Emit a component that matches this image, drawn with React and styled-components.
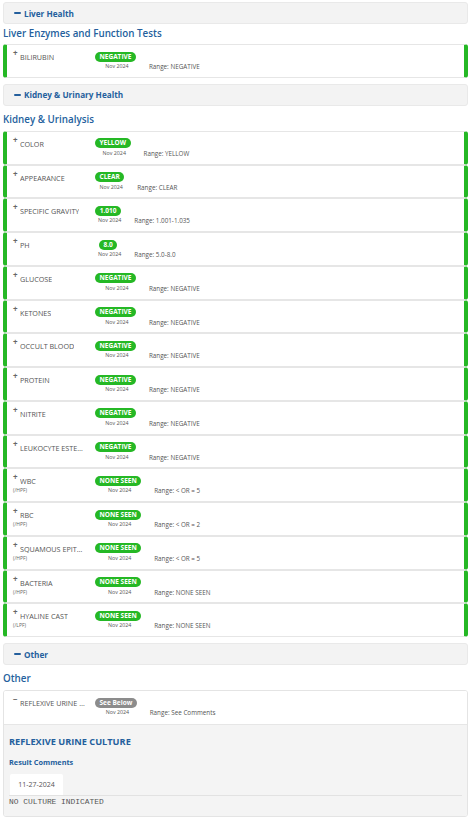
import React from 'react';
import styled, { createGlobalStyle } from 'styled-components';

const GlobalStyle = createGlobalStyle`
  body {
    margin: 0;
    background: #fff;
    font-family: 'Open Sans', 'Liberation Sans', sans-serif;
  }
`;

const BLUE = '#245f9d';
const GREEN = '#25b825';

const urinalysis = [
  { name: 'COLOR', value: 'YELLOW', range: 'YELLOW' },
  { name: 'APPEARANCE', value: 'CLEAR', range: 'CLEAR' },
  { name: 'SPECIFIC GRAVITY', value: '1.010', range: '1.001-1.035' },
  { name: 'PH', value: '8.0', range: '5.0-8.0' },
  { name: 'GLUCOSE', value: 'NEGATIVE', range: 'NEGATIVE' },
  { name: 'KETONES', value: 'NEGATIVE', range: 'NEGATIVE' },
  { name: 'OCCULT BLOOD', value: 'NEGATIVE', range: 'NEGATIVE' },
  { name: 'PROTEIN', value: 'NEGATIVE', range: 'NEGATIVE' },
  { name: 'NITRITE', value: 'NEGATIVE', range: 'NEGATIVE' },
  { name: 'LEUKOCYTE ESTERASE', value: 'NEGATIVE', range: 'NEGATIVE' },
  { name: 'WBC', unit: '(/HPF)', value: 'NONE SEEN', range: '< OR = 5' },
  { name: 'RBC', unit: '(/HPF)', value: 'NONE SEEN', range: '< OR = 2' },
  { name: 'SQUAMOUS EPITHELIAL CELLS', unit: '(/HPF)', value: 'NONE SEEN', range: '< OR = 5' },
  { name: 'BACTERIA', unit: '(/HPF)', value: 'NONE SEEN', range: 'NONE SEEN' },
  { name: 'HYALINE CAST', unit: '(/LPF)', value: 'NONE SEEN', range: 'NONE SEEN' },
];

function ResultLine({ item, open = false, flagged = true, tone }) {
  return (
    <Row $flagged={flagged}>
      <NameCol>
        <NameLine>
          <Toggle>{open ? '\u2212' : '+'}</Toggle>
          <Name title={item.name}>{item.name}</Name>
        </NameLine>
        {item.unit && <Unit>{item.unit}</Unit>}
      </NameCol>
      <ValueCol>
        <Badge $tone={tone}>{item.value}</Badge>
        <DateText>Nov 2024</DateText>
      </ValueCol>
      <Range>Range: {item.range}</Range>
    </Row>
  );
}

function SectionToggle({ label }) {
  return (
    <Toggler>
      <Bar />
      {label}
    </Toggler>
  );
}

export default function App() {
  return (
    <Page>
      <GlobalStyle />
      <SectionToggle label="Liver Health" />
      <Heading $space="tight">Liver Enzymes and Function Tests</Heading>
      <ResultLine item={{ name: 'BILIRUBIN', value: 'NEGATIVE', range: 'NEGATIVE' }} />

      <Gap />
      <SectionToggle label="Kidney & Urinary Health" />
      <Heading>Kidney &amp; Urinalysis</Heading>
      <Stack>
        {urinalysis.map((r) => (
          <ResultLine key={r.name} item={r} />
        ))}
      </Stack>

      <Gap />
      <SectionToggle label="Other" />
      <Heading>Other</Heading>
      <OtherCard>
        <ResultLine
          open
          flagged={false}
          tone="gray"
          item={{ name: 'REFLEXIVE URINE CULTURE', value: 'See Below', range: 'See Comments' }}
        />
        <Detail>
          <DetailTitle>REFLEXIVE URINE CULTURE</DetailTitle>
          <CommentsLabel>Result Comments</CommentsLabel>
          <Tabs>
            <Tab>11-27-2024</Tab>
          </Tabs>
          <Comment>NO CULTURE INDICATED</Comment>
        </Detail>
      </OtherCard>
    </Page>
  );
}

const Page = styled.div`
  padding: 2px 6px 4px 3px;
`;

const Toggler = styled.div`
  height: 22px;
  box-sizing: border-box;
  display: flex;
  align-items: center;
  gap: 3px;
  padding-left: 10px;
  background: #f3f3f3;
  border: 1px solid #e9e9e9;
  border-radius: 3px;
  color: ${BLUE};
  font-size: 8.2px;
  font-weight: 700;
`;

const Bar = styled.span`
  width: 7px;
  height: 2px;
  background: ${BLUE};
  border-radius: 1px;
`;

const Heading = styled.h3`
  margin: 0;
  height: ${(p) => (p.$space === 'tight' ? '20px' : '25px')};
  padding-top: ${(p) => (p.$space === 'tight' ? '3px' : '7px')};
  box-sizing: border-box;
  line-height: 14px;
  font-size: 9.8px;
  font-weight: 600;
  color: ${BLUE};
`;

const Gap = styled.div`
  height: 6px;
`;

const Stack = styled.div`
  display: flex;
  flex-direction: column;
`;

const Row = styled.div`
  height: 33.75px;
  box-sizing: border-box;
  display: flex;
  align-items: flex-start;
  padding-left: ${(p) => (p.$flagged ? '6px' : '9px')};
  background: #fff;
  ${(p) =>
    p.$flagged
      ? `
    border: 1px solid #e6e6e6;
    border-left: 4px solid ${GREEN};
    border-right: 4px solid ${GREEN};
    border-radius: 3px;
  `
      : `
    border-bottom: 1px solid #e6e6e6;
  `}
`;

const NameCol = styled.div`
  width: 82px;
  flex-shrink: 0;
  display: flex;
  flex-direction: column;
  padding-top: 4px;
`;

const NameLine = styled.div`
  display: flex;
  align-items: flex-start;
`;

const Toggle = styled.span`
  width: 7px;
  flex-shrink: 0;
  font-size: 8px;
  line-height: 8px;
  font-weight: 700;
  color: #666;
`;

const Name = styled.span`
  max-width: 66px;
  margin-top: 3px;
  white-space: nowrap;
  overflow: hidden;
  text-overflow: ellipsis;
  font-size: 7.2px;
  line-height: 10px;
  color: #555;
`;

const Unit = styled.span`
  margin-top: 1px;
  font-size: 5px;
  line-height: 6px;
  color: #666;
`;

const ValueCol = styled.div`
  display: flex;
  flex-direction: column;
  align-items: center;
  padding-top: 6.5px;
`;

const Badge = styled.span`
  height: 10px;
  line-height: 10px;
  padding: 0 4.5px;
  border-radius: 5px;
  background: ${(p) => (p.$tone === 'gray' ? '#8c8c8c' : GREEN)};
  color: #fff;
  font-size: 6.5px;
  font-weight: 700;
  white-space: nowrap;
`;

const DateText = styled.span`
  margin-top: 1.5px;
  padding-left: 3px;
  font-size: 5.3px;
  line-height: 6px;
  color: #555;
`;

const Range = styled.span`
  margin-left: 13px;
  padding-top: 18px;
  font-size: 6.3px;
  line-height: 8px;
  color: #555;
  white-space: nowrap;
`;

const OtherCard = styled.div`
  border: 1px solid #e4e4e4;
  border-radius: 3px;
  overflow: hidden;
`;

const Detail = styled.div`
  background: #f4f4f4;
  padding: 10px 5px 9px;
`;

const DetailTitle = styled.div`
  font-size: 9.2px;
  line-height: 14px;
  font-weight: 700;
  color: ${BLUE};
`;

const CommentsLabel = styled.div`
  margin-top: 8px;
  font-size: 7.3px;
  line-height: 10px;
  font-weight: 700;
  color: ${BLUE};
`;

const Tabs = styled.div`
  margin-top: 7px;
  display: flex;
  border-bottom: 1px solid #e2e2e2;
`;

const Tab = styled.div`
  width: 53px;
  height: 21px;
  margin-left: 1px;
  display: flex;
  align-items: center;
  justify-content: center;
  background: #fff;
  border-radius: 2px 2px 0 0;
  font-size: 7px;
  color: #555;
`;

const Comment = styled.div`
  margin-top: 1px;
  font-family: 'Liberation Mono', monospace;
  font-size: 7.9px;
  line-height: 10px;
  color: #555;
`;
